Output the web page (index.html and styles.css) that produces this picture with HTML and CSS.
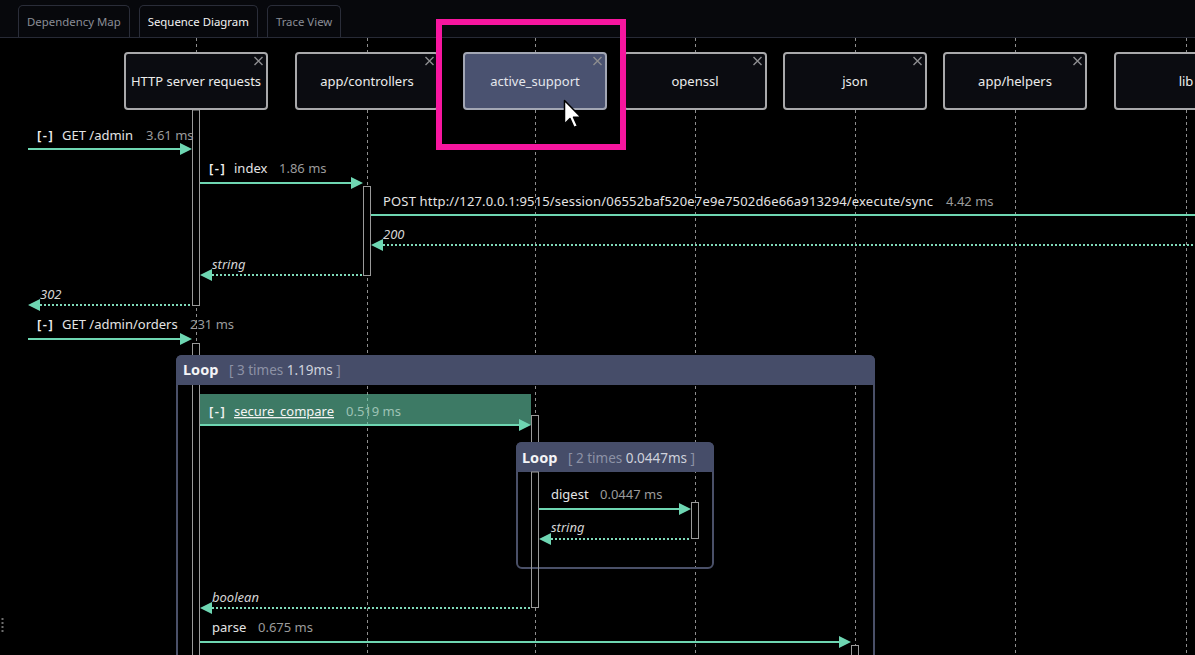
FILE: index.html
```html
<!DOCTYPE html>
<html lang="en">
<head>
<meta charset="utf-8">
<title>Sequence Diagram</title>
<link rel="stylesheet" href="styles.css">
</head>
<body>
<div class="app">
  <nav class="tabs">
    <div class="tab">Dependency Map</div>
    <div class="tab active">Sequence Diagram</div>
    <div class="tab">Trace View</div>
  </nav>
  <main class="diagram">
    <svg class="canvas" width="1195" height="617" viewBox="0 38 1195 617" xmlns="http://www.w3.org/2000/svg">
      <g class="lifeline">
        <line x1="196.5" y1="38" x2="196.5" y2="655"/>
        <line x1="367.5" y1="38" x2="367.5" y2="655"/>
        <line x1="535.5" y1="38" x2="535.5" y2="655"/>
        <line x1="695.5" y1="38" x2="695.5" y2="655"/>
        <line x1="855.5" y1="38" x2="855.5" y2="655"/>
        <line x1="1015.5" y1="38" x2="1015.5" y2="655"/>
        <line x1="1186.5" y1="38" x2="1186.5" y2="655"/>
      </g>
      <line class="grip" x1="2.5" y1="618" x2="2.5" y2="633"/>

      <g class="activation">
        <rect x="192.5" y="110" width="7" height="195.5"/>
        <rect x="363.5" y="186.5" width="7" height="89"/>
        <rect x="192.5" y="343.5" width="7" height="400"/>
        <rect x="531.5" y="415.5" width="7" height="192"/>
        <rect x="691.5" y="502.5" width="7" height="36"/>
        <rect x="851.5" y="645.5" width="7" height="60"/>
      </g>

      <g class="participant">
        <rect x="125" y="53" width="142" height="56" rx="3"/>
        <text x="196" y="86">HTTP server requests</text>
        <path class="close" d="M254.5 57 l8 8 M262.5 57 l-8 8"/>
      </g>
      <g class="participant">
        <rect x="296" y="53" width="142" height="56" rx="3"/>
        <text x="367" y="86">app/controllers</text>
        <path class="close" d="M425.5 57 l8 8 M433.5 57 l-8 8"/>
      </g>
      <g class="participant selected">
        <rect x="464" y="53" width="142" height="56" rx="3"/>
        <text x="535" y="86">active_support</text>
        <path class="close" d="M593.5 57 l8 8 M601.5 57 l-8 8"/>
      </g>
      <g class="participant">
        <rect x="624" y="53" width="142" height="56" rx="3"/>
        <text x="695" y="86">openssl</text>
        <path class="close" d="M753.5 57 l8 8 M761.5 57 l-8 8"/>
      </g>
      <g class="participant">
        <rect x="784" y="53" width="142" height="56" rx="3"/>
        <text x="855" y="86">json</text>
        <path class="close" d="M913.5 57 l8 8 M921.5 57 l-8 8"/>
      </g>
      <g class="participant">
        <rect x="944" y="53" width="142" height="56" rx="3"/>
        <text x="1015" y="86">app/helpers</text>
        <path class="close" d="M1073.5 57 l8 8 M1081.5 57 l-8 8"/>
      </g>
      <g class="participant">
        <rect x="1115" y="53" width="142" height="56" rx="3"/>
        <text x="1186" y="86">lib</text>
      </g>

      <!-- loop frames -->
      <rect class="frame" x="177" y="356" width="697" height="400" rx="5"/>
      <path class="frame-head" d="M176 385 V361 Q176 355 182 355 H869 Q875 355 875 361 V385 Z"/>
      <text class="loop-title" y="375"><tspan x="183" class="loop-word">Loop</tspan><tspan x="229" class="loop-meta">[ 3 times </tspan><tspan class="loop-time">1.19ms</tspan><tspan class="loop-meta"> ]</tspan></text>

      <rect class="highlight-row" x="200" y="394" width="331" height="31"/>

      <rect class="frame" x="517" y="443" width="196" height="125" rx="5"/>
      <path class="frame-head" d="M516 472 V448 Q516 442 522 442 H708 Q714 442 714 448 V472 Z"/>
      <text class="loop-title" y="463"><tspan x="522" class="loop-word">Loop</tspan><tspan x="568" class="loop-meta">[ 2 times </tspan><tspan class="loop-time">0.0447ms</tspan><tspan class="loop-meta"> ]</tspan></text>
      <rect class="activation-top" x="531.5" y="472" width="7" height="135.5"/>

      <!-- messages -->
      <g class="msg">
        <line x1="28" y1="149" x2="181" y2="149"/>
        <polygon points="192,149 180,143 180,155"/>
        <line x1="200" y1="183" x2="352" y2="183"/>
        <polygon points="363,183 351,177 351,189"/>
        <line x1="371" y1="215" x2="1195" y2="215"/>
        <line x1="28" y1="339" x2="181" y2="339"/>
        <polygon points="192,339 180,333 180,345"/>
        <line x1="200" y1="425" x2="520" y2="425"/>
        <polygon points="531,425 519,419 519,431"/>
        <line x1="539" y1="509" x2="680" y2="509"/>
        <polygon points="691,509 679,503 679,515"/>
        <line x1="200" y1="642" x2="840" y2="642"/>
        <polygon points="851,642 839,636 839,648"/>
      </g>
      <g class="ret">
        <line class="dots" x1="383" y1="245" x2="1195" y2="245"/>
        <polygon points="371,245 383,239 383,251"/>
        <line class="dots" x1="212" y1="275" x2="363" y2="275"/>
        <polygon points="200,275 212,269 212,281"/>
        <line class="dots" x1="40" y1="305" x2="192" y2="305"/>
        <polygon points="28,305 40,299 40,311"/>
        <line class="dots" x1="551" y1="539" x2="691" y2="539"/>
        <polygon points="539,539 551,533 551,545"/>
        <line class="dots" x1="212" y1="608" x2="531" y2="608"/>
        <polygon points="200,608 212,602 212,614"/>
      </g>

      <!-- labels -->
      <text class="label" y="140"><tspan x="37" class="toggle">[-]</tspan><tspan x="62">GET /admin</tspan><tspan x="146" class="dur">3.61 ms</tspan></text>
      <text class="label" y="173"><tspan x="209" class="toggle">[-]</tspan><tspan x="234">index</tspan><tspan x="279" class="dur">1.86 ms</tspan></text>
      <text class="label" y="206"><tspan x="383" textLength="550" lengthAdjust="spacing">POST http://127.0.0.1:9515/session/06552baf520e7e9e7502d6e66a913294/execute/sync</tspan><tspan x="946" class="dur">4.42 ms</tspan></text>
      <text class="label ret-label" x="383" y="239">200</text>
      <text class="label ret-label" x="212" y="269">string</text>
      <text class="label ret-label" x="40" y="299">302</text>
      <text class="label" y="329"><tspan x="37" class="toggle">[-]</tspan><tspan x="62">GET /admin/orders</tspan><tspan x="190" class="dur">231 ms</tspan></text>
      <text class="label" y="416"><tspan x="209" class="toggle">[-]</tspan><tspan x="234" class="link">secure_compare</tspan><tspan x="346" class="dur-green">0.519 ms</tspan></text>
      <text class="label" y="499"><tspan x="551">digest</tspan><tspan x="600" class="dur">0.0447 ms</tspan></text>
      <text class="label ret-label" x="551" y="532">string</text>
      <text class="label ret-label" x="212" y="602">boolean</text>
      <text class="label" y="632"><tspan x="212">parse</tspan><tspan x="258" class="dur">0.675 ms</tspan></text>
    </svg>
  </main>

  <div class="focus-ring"></div>
  <svg class="cursor" width="20" height="32" viewBox="0 0 20 32" xmlns="http://www.w3.org/2000/svg">
    <path d="M1.5 1.5 V25 L7 19.5 L11 28.5 L14.5 27 L10.5 18.3 L18 18.3 Z"/>
  </svg>
</div>
</body>
</html>
```

FILE: styles.css
```css
html, body {
  margin: 0;
  padding: 0;
  background: #000;
  overflow: hidden;
}

.app {
  position: relative;
  width: 1195px;
  height: 655px;
  display: flex;
  flex-direction: column;
  font-family: "Noto Sans", "DejaVu Sans", sans-serif;
}

.tabs {
  display: flex;
  align-items: flex-end;
  gap: 9px;
  height: 38px;
  box-sizing: border-box;
  padding-left: 18px;
  background: #07080c;
  border-bottom: 1px solid #272a36;
}

.tab {
  height: 32px;
  box-sizing: border-box;
  padding: 0 8px;
  border: 1px solid #2a2d39;
  border-bottom: none;
  border-radius: 5px 5px 0 0;
  font-size: 11.4px;
  line-height: 31px;
  color: #8a8d96;
  white-space: nowrap;
}

.tab.active {
  color: #f2f2f2;
}

.diagram {
  flex: 1;
  background: #000;
  overflow: hidden;
}

.canvas {
  display: block;
}

.lifeline line {
  stroke: #8e8e8e;
  stroke-width: 1;
  stroke-dasharray: 3 3;
}

.grip {
  stroke: #6e6e6e;
  stroke-width: 2;
  stroke-dasharray: 2 2;
}

.activation rect,
.activation-top {
  fill: #000;
  stroke: #9a9a9a;
  stroke-width: 1;
}

.activation-top {
  fill: none;
}

.participant rect {
  fill: #0b0c11;
  stroke: #a9a9ab;
  stroke-width: 2;
}

.participant.selected rect {
  fill: #4a5270;
  stroke: #a3a7b4;
}

.participant text {
  font-size: 13px;
  fill: #ececec;
  text-anchor: middle;
}

.participant.selected text {
  fill: #e4e6ec;
}

.close {
  stroke: #8d8d8f;
  stroke-width: 1.4;
  fill: none;
}

.frame {
  fill: none;
  stroke: #4a5068;
  stroke-width: 2;
}

.frame-head {
  fill: #464d69;
}

.loop-title {
  font-size: 13.5px;
}

.loop-word {
  font-weight: 700;
  fill: #f4f4f6;
  font-size: 14.5px;
}

.loop-meta {
  fill: #8d92a6;
}

.loop-time {
  fill: #cfd2dc;
}

.highlight-row {
  fill: rgba(102, 204, 168, 0.6);
}

.msg line {
  stroke: #6ed6b2;
  stroke-width: 2;
}

.msg polygon,
.ret polygon {
  fill: #6ed6b2;
}

.ret .dots {
  stroke: #7fd9b9;
  stroke-width: 2;
  stroke-dasharray: 2 2;
}

.label {
  font-size: 13px;
  fill: #e4e4e4;
}

.toggle {
  fill: #f2f2f2;
  font-weight: 600;
  letter-spacing: 1.5px;
}

.dur {
  fill: #9b9b9b;
}

.dur-green {
  fill: #9ec3b5;
}

.link {
  text-decoration: underline;
  fill: #f4f4f4;
}

.ret-label {
  font-style: italic;
  fill: #d4d4d4;
}

.focus-ring {
  position: absolute;
  left: 436px;
  top: 19px;
  width: 190px;
  height: 131px;
  box-sizing: border-box;
  border: 6px solid #f7169f;
  pointer-events: none;
}

.cursor {
  position: absolute;
  left: 563px;
  top: 99px;
}

.cursor path {
  fill: #ffffff;
  stroke: #000000;
  stroke-width: 1.5;
  stroke-linejoin: round;
}
```
